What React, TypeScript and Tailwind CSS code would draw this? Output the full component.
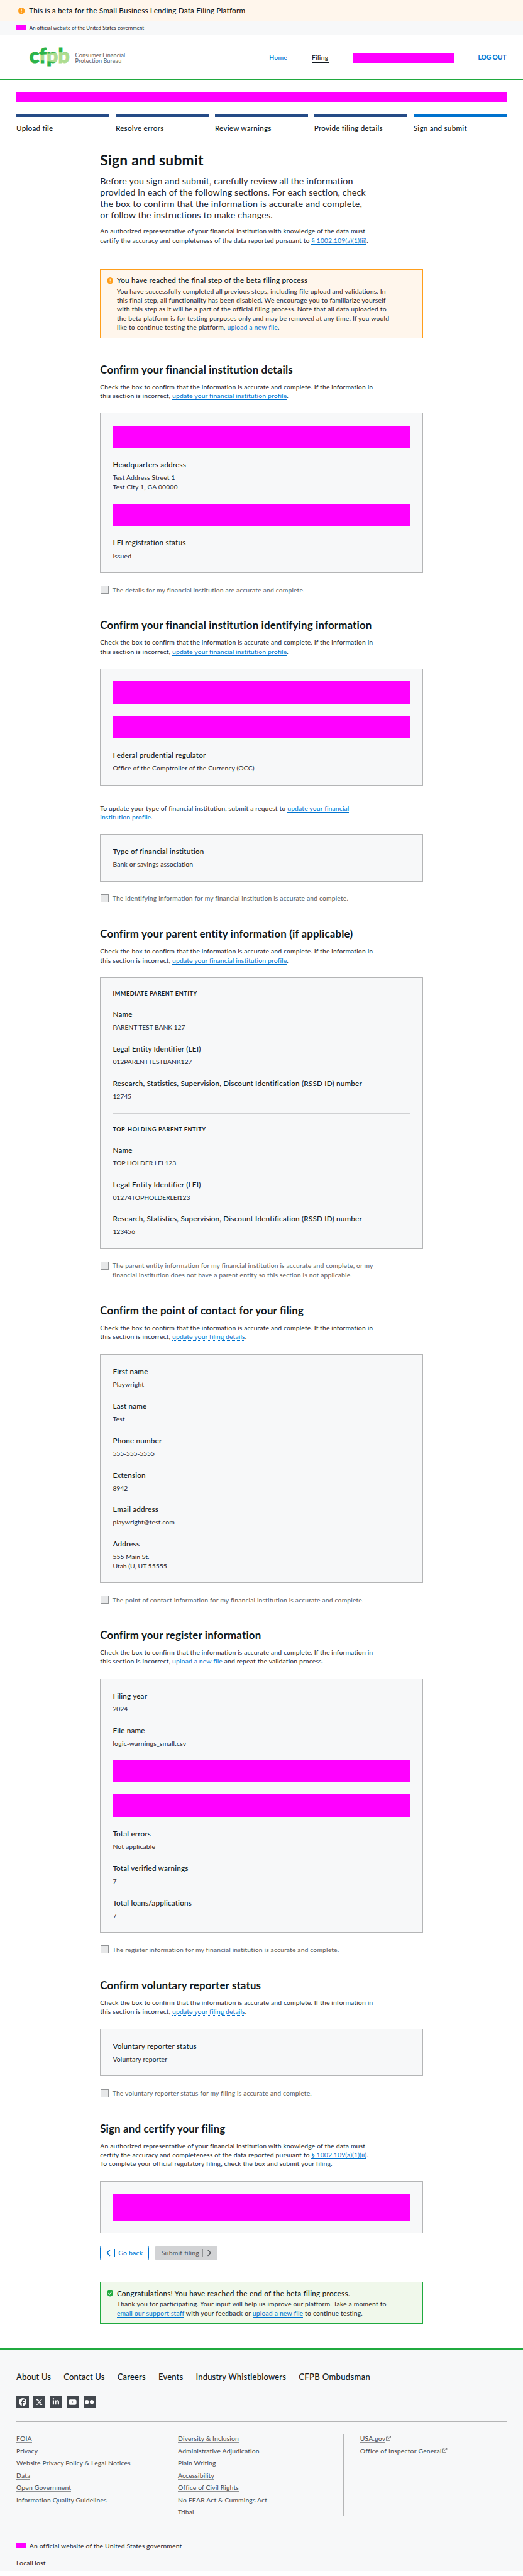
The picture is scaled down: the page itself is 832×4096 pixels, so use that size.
import type { ReactNode } from "react";
import { FaFacebook, FaLinkedinIn, FaXTwitter, FaYoutube } from "react-icons/fa6";

function TextLink({ children, dotted = false }: { children: ReactNode; dotted?: boolean }) {
  return (
    <a className={`border-b border-[#0072ce] text-[#0072ce] ${dotted ? "border-dotted" : "border-solid"}`}>
      {children}
    </a>
  );
}

function Redacted({ className }: { className: string }) {
  return <div className={`bg-[#ff00ff] ${className}`} />;
}

function WarningIcon({ className = "" }: { className?: string }) {
  return (
    <svg viewBox="0 0 16 16" className={`size-4 shrink-0 ${className}`}>
      <circle cx="8" cy="8" r="8" fill="#ff9e1b" />
      <path d="M8 3.2v6" stroke="#fff" strokeWidth="1.5" strokeLinecap="round" />
      <circle cx="8" cy="12" r="1" fill="#fff" />
    </svg>
  );
}

function SuccessIcon({ className = "" }: { className?: string }) {
  return (
    <svg viewBox="0 0 16 16" className={`size-4 shrink-0 ${className}`}>
      <circle cx="8" cy="8" r="8" fill="#20aa3f" />
      <path d="M4.3 8.4l2.6 2.7 4.8-6" stroke="#fff" strokeWidth="1.8" fill="none" strokeLinecap="round" strokeLinejoin="round" />
    </svg>
  );
}

function Logo() {
  return (
    <div className="flex items-center">
      <svg width="102" height="52" viewBox="0 0 102 52" className="overflow-visible">
        <defs>
          <pattern id="beam" patternUnits="userSpaceOnUse" x="-5" y="-5" width="115" height="65">
            <rect width="115" height="65" fill="#2cb34a" />
            <path d="M34 24.5L78 17H115V46H78V43L34 36.500Z" fill="#addc91" />
          </pattern>
        </defs>
        <text
          x="1"
          y="38.500"
          textLength="99"
          lengthAdjust="spacingAndGlyphs"
          fontFamily="Lato"
          fontWeight="900"
          fontSize="50"
          fill="url(#beam)"
          stroke="url(#beam)"
          strokeWidth="1.600"
        >
          cfpb
        </text>
      </svg>
      <div className="ml-[12px] text-[14px] leading-[14.300px] tracking-[0.010em] text-[#5a5d61]">
        <div>Consumer Financial</div>
        <div>Protection Bureau</div>
      </div>
    </div>
  );
}

function Field({ label, children, tracking = "" }: { label: string; children: ReactNode; tracking?: string }) {
  return (
    <div>
      <div className="mb-[9.900px] text-[18px] leading-[22.500px] font-medium tracking-[0.0165em] text-[#101820]">{label}</div>
      <div className={tracking}>{children}</div>
    </div>
  );
}

function Well({ children }: { children: ReactNode }) {
  return (
    <div className="mt-[31px] flex flex-col gap-[30px] border border-[#b4b5b6] bg-[#f7f8f9] p-[29.500px]">
      {children}
    </div>
  );
}

function Confirmation({ children }: { children: ReactNode }) {
  return (
    <label className="mt-[30px] flex items-start gap-[9px] text-[#5a5d61]">
      <span className="mt-[1px] ml-px size-[20px] shrink-0 border border-[#919395] bg-[#e7e8e9]" />
      <span className="whitespace-nowrap">{children}</span>
    </label>
  );
}

function Section({ title, intro, children, className = "mb-[59.500px]" }: { title: string; intro: ReactNode; children: ReactNode; className?: string }) {
  return (
    <section className={className}>
      <h2 className="text-[26px] leading-[32.500px] font-bold tracking-[0.0085em] text-[#101820]">{title}</h2>
      <p className="mt-[15px] whitespace-nowrap">{intro}</p>
      {children}
    </section>
  );
}

const standardIntro = (
  <>
    Check the box to confirm that the information is accurate and complete. If the information in
    <br />
    <span className="tracking-[0.0175em]">this section is incorrect, </span>
  </>
);

function ParentEntity({ title, name, lei, rssd }: { title: string; name: string; lei: string; rssd: string }) {
  return (
    <>
      <h3 className="text-[14px] leading-[17.500px] font-bold tracking-[0.0605em] text-[#101820]">{title}</h3>
      <Field label="Name" tracking="tracking-[-0.009em]">{name}</Field>
      <Field label="Legal Entity Identifier (LEI)" tracking="tracking-[-0.009em]">{lei}</Field>
      <Field label="Research, Statistics, Supervision, Discount Identification (RSSD ID) number" tracking="tracking-[-0.010em]">{rssd}</Field>
    </>
  );
}

function Chevron({ direction }: { direction: "left" | "right" }) {
  return (
    <svg viewBox="0 0 10 16" className="h-[16px] w-[10px]">
      <path
        d={direction === "left" ? "M8.500 1.500L2 8l6.500 6.500" : "M1.500 1.500L8 8l-6.500 6.500"}
        fill="none"
        stroke="currentColor"
        strokeWidth="2.300"
        strokeLinecap="round"
        strokeLinejoin="round"
      />
    </svg>
  );
}

function ExternalIcon() {
  return (
    <svg viewBox="0 0 13 13" className="ml-[1px] inline-block h-[13px] w-[13px] align-[0px]">
      <path d="M6.500 3H1v9h9V7M8 1h4v4M12 1L5.500 8" fill="none" stroke="#5a5d61" strokeWidth="1.300" />
    </svg>
  );
}

function FooterLink({ children, external = false }: { children: ReactNode; external?: boolean }) {
  return (
    <li className="whitespace-nowrap">
      <a className="border-b border-[#919395]">{children}</a>
      {external && <ExternalIcon />}
    </li>
  );
}

const steps = ["Upload file", "Resolve errors", "Review warnings", "Provide filing details", "Sign and submit"];
const footerNav = ["About Us", "Contact Us", "Careers", "Events", "Industry Whistleblowers"];
const footerA = ["FOIA", "Privacy", "Website Privacy Policy & Legal Notices", "Data", "Open Government", "Information Quality Guidelines"];
const footerB = ["Diversity & Inclusion", "Administrative Adjudication", "Plain Writing", "Accessibility", "Office of Civil Rights", "No FEAR Act & Cummings Act", "Tribal"];

export default function App() {
  return (
    <div className="w-[1280px] bg-white font-[Lato,'Open_Sans',sans-serif] text-[16px] leading-[22px] tracking-[0.014em] text-[#1d252d] [zoom:0.65]">
      <div className="flex h-[53px] items-center border-b border-[#d5d6d8] bg-[#fff6ec] pl-[45px]">
        <WarningIcon />
        <span className="ml-[10px] text-[18px] leading-[22.500px] font-medium tracking-[0.017em] text-[#101820]">
          This is a beta for the Small Business Lending Data Filing Platform
        </span>
      </div>
      <div className="flex h-[33px] items-center border-b border-[#b4b5b6] bg-[#f7f8f9] pl-[40px]">
        <Redacted className="mb-[2px] h-[13px] w-[24px]" />
        <span className="ml-[8px] text-[12px] leading-[16px] tracking-[0.015em]">An official website of the United States government</span>
      </div>

      <header className="flex h-[110.500px] items-center justify-between border-b-5 border-[#20aa3f] pt-[6px] pr-[40px] pl-[70px]">
        <Logo />
        <nav className="flex items-start gap-[60px] font-medium text-[#0072ce]">
          <a className="tracking-[0.020em]">Home</a>
          <a className="border-b-2 border-[#101820] pb-[1px] tracking-[0.032em] text-[#101820]">Filing</a>
          <Redacted className="mt-px h-[24px] w-[246px]" />
          <a className="w-[70px] font-bold whitespace-nowrap tracking-[-0.013em]">LOG OUT</a>
        </nav>
      </header>

      <div className="px-[40px]">
        <Redacted className="mt-[30px] h-[22.500px]" />
        <ol className="mt-[30px] grid grid-cols-5 gap-[15px]">
          {steps.map((step, i) => (
            <li key={step}>
              <div className={`h-[8px] ${i === 4 ? "bg-[#0072ce]" : "bg-[#254b87]"}`} />
              <div className="mt-[14px] text-[18px] leading-[22.500px] font-medium tracking-[0.020em] text-[#101820]">{step}</div>
            </li>
          ))}
        </ol>
      </div>

      <main className="mx-auto mt-[46.900px] w-[790px]">
        <h1 className="text-[35px] leading-[43.750px] font-bold tracking-[0.0118em] text-[#101820]">Sign and submit</h1>
        <p className="mt-[15px] text-[22px] leading-[27.500px] whitespace-nowrap">
          Before you sign and submit, carefully review all the information
          <br />
          provided in each of the following sections. For each section, check
          <br />
          the box to confirm that the information is accurate and complete,
          <br />
          or follow the instructions to make changes.
        </p>
        <p className="mt-[15.200px] whitespace-nowrap">
          An authorized representative of your financial institution with knowledge of the data must
          <br />
          certify the accuracy and completeness of the data reported pursuant to <TextLink>§ 1002.109(a)(1)(ii)</TextLink>.
        </p>

        <div className="mt-[59.500px] mb-[60px] flex border border-[#ff9e1b] bg-[#fff6ec] p-[14.500px]">
          <WarningIcon className="mt-[4px]" />
          <div className="ml-[9px] whitespace-nowrap">
            <div className="mb-[5px] text-[18px] leading-[22.500px] font-medium tracking-[0.020em] text-[#101820]">
              You have reached the final step of the beta filing process
            </div>
            <p className="tracking-[0.0185em]">
              You have successfully completed all previous steps, including file upload and validations. In
              <br />
              this final step, all functionality has been disabled. We encourage you to familiarize yourself
              <br />
              with this step as it will be a part of the official filing process. Note that all data uploaded to
              <br />
              the beta platform is for testing purposes only and may be removed at any time. If you would
              <br />
              like to continue testing the platform, <TextLink>upload a new file</TextLink>.
            </p>
          </div>
        </div>

        <Section
          title="Confirm your financial institution details"
          intro={<>{standardIntro}<TextLink>update your financial institution profile</TextLink>.</>}
        >
          <Well>
            <Redacted className="h-[54.500px]" />
            <Field label="Headquarters address">
              <div>Test Address Street 1</div>
              <div>Test City 1, GA 00000</div>
            </Field>
            <Redacted className="h-[54.500px]" />
            <Field label="LEI registration status">Issued</Field>
          </Well>
          <Confirmation>The details for my financial institution are accurate and complete.</Confirmation>
        </Section>

        <Section
          title="Confirm your financial institution identifying information"
          intro={<>{standardIntro}<TextLink>update your financial institution profile</TextLink>.</>}
        >
          <Well>
            <Redacted className="h-[54.500px]" />
            <Redacted className="h-[54.500px]" />
            <Field label="Federal prudential regulator">Office of the Comptroller of the Currency (OCC)</Field>
          </Well>
          <p className="mt-[44.500px] whitespace-nowrap">
            To update your type of financial institution, submit a request to <TextLink>update your financial</TextLink>
            <br />
            <TextLink>institution profile</TextLink>.
          </p>
          <Well>
            <Field label="Type of financial institution">Bank or savings association</Field>
          </Well>
          <Confirmation>The identifying information for my financial institution is accurate and complete.</Confirmation>
        </Section>

        <Section
          className="mb-[60.500px]"
          title="Confirm your parent entity information (if applicable)"
          intro={<>{standardIntro}<TextLink>update your financial institution profile</TextLink>.</>}
        >
          <Well>
            <ParentEntity title="IMMEDIATE PARENT ENTITY" name="PARENT TEST BANK 127" lei="012PARENTTESTBANK127" rssd="12745" />
            <hr className="-mb-[0.500px] border-t border-[#d0d1d3]" />
            <ParentEntity title="TOP-HOLDING PARENT ENTITY" name="TOP HOLDER LEI 123" lei="01274TOPHOLDERLEI123" rssd="123456" />
          </Well>
          <Confirmation>
            The parent entity information for my financial institution is accurate and complete, or my
            <br />
            financial institution does not have a parent entity so this section is not applicable.
          </Confirmation>
        </Section>

        <Section
          className="mb-[58.500px]"
          title="Confirm the point of contact for your filing"
          intro={<>{standardIntro}<TextLink dotted>update your filing details</TextLink>.</>}
        >
          <Well>
            <Field label="First name">Playwright</Field>
            <Field label="Last name">Test</Field>
            <Field label="Phone number" tracking="tracking-[-0.013em]">555-555-5555</Field>
            <Field label="Extension" tracking="tracking-[-0.010em]">8942</Field>
            <Field label="Email address">playwright@test.com</Field>
            <Field label="Address" tracking="tracking-normal">
              <div>555 Main St.</div>
              <div>Utah (U, UT 55555</div>
            </Field>
          </Well>
          <Confirmation>The point of contact information for my financial institution is accurate and complete.</Confirmation>
        </Section>

        <Section
          className="mb-[60px]"
          title="Confirm your register information"
          intro={<>{standardIntro}<TextLink dotted>upload a new file</TextLink> and repeat the validation process.</>}
        >
          <Well>
            <Field label="Filing year" tracking="tracking-[-0.010em]">2024</Field>
            <Field label="File name" tracking="tracking-[0.024em]">logic-warnings_small.csv</Field>
            <Redacted className="h-[54.400px]" />
            <Redacted className="h-[54.400px]" />
            <Field label="Total errors">Not applicable</Field>
            <Field label="Total verified warnings">7</Field>
            <Field label="Total loans/applications">7</Field>
          </Well>
          <Confirmation>The register information for my financial institution is accurate and complete.</Confirmation>
        </Section>

        <Section
          title="Confirm voluntary reporter status"
          intro={<>{standardIntro}<TextLink dotted>update your filing details</TextLink>.</>}
        >
          <Well>
            <Field label="Voluntary reporter status">Voluntary reporter</Field>
          </Well>
          <Confirmation>The voluntary reporter status for my filing is accurate and complete.</Confirmation>
        </Section>

        <Section
          className=""
          title="Sign and certify your filing"
          intro={
            <>
              An authorized representative of your financial institution with knowledge of the data must
              <br />
              certify the accuracy and completeness of the data reported pursuant to <TextLink>§ 1002.109(a)(1)(ii)</TextLink>.
              <br />
              To complete your official regulatory filing, check the box and submit your filing.
            </>
          }
        >
          <Well>
            <Redacted className="h-[66px]" />
          </Well>
        </Section>

        <div className="mt-[30px] flex h-[36.700px] gap-[15px] font-medium tracking-[0.022em]">
          <button className="flex items-center rounded-[4px] border border-[#0072ce] px-[14px] text-[#0072ce]">
            <Chevron direction="left" />
            <span className="ml-[10px] h-[19px] border-l border-[#0072ce] pl-[7.500px]" />
            Go back
          </button>
          <button className="flex items-center rounded-[4px] bg-[#d2d3d5] px-[15px] text-[#5a5d61]">
            Submit filing
            <span className="ml-[8px] h-[19px] border-l border-[#919395] pl-[10.500px]" />
            <Chevron direction="right" />
          </button>
        </div>

        <div className="mt-[52px] mb-[60px] flex border border-[#20aa3f] bg-[#f0f8eb] p-[14.500px]">
          <SuccessIcon className="mt-[4px]" />
          <div className="ml-[9px] whitespace-nowrap">
            <div className="mb-[5px] text-[18px] leading-[22.500px] font-medium tracking-[0.0235em] text-[#101820]">
              Congratulations! You have reached the end of the beta filing process.
            </div>
            <p className="tracking-[0.0175em]">
              Thank you for participating. Your input will help us improve our platform. Take a moment to
              <br />
              <TextLink>email our support staff</TextLink> with your feedback or <TextLink>upload a new file</TextLink> to continue testing.
            </p>
          </div>
        </div>
      </main>

      <footer className="h-[544px] border-t-5 border-[#20aa3f] bg-[#f7f8f9] px-[40px] pt-[51px]">
        <nav className="flex gap-[31px] text-[20px] leading-[25px] font-medium tracking-[0.014em] whitespace-nowrap text-[#101820]">
          {footerNav.map((item) => (
            <a key={item}>{item}</a>
          ))}
          <a className="tracking-[0.029em]">CFPB Ombudsman</a>
        </nav>
        <div className="mt-[34.700px] flex gap-[11px] text-white">
          <a className="flex size-[30px] items-center justify-center bg-[#43484e]"><FaFacebook className="size-[19px]" /></a>
          <a className="flex size-[30px] items-center justify-center bg-[#43484e]"><FaXTwitter className="size-[17px]" /></a>
          <a className="flex size-[30px] items-center justify-center bg-[#43484e]"><FaLinkedinIn className="size-[18px]" /></a>
          <a className="flex size-[30px] items-center justify-center bg-[#43484e]"><FaYoutube className="size-[20px]" /></a>
          <a className="flex size-[30px] items-center justify-center bg-[#43484e]">
            <svg viewBox="0 0 22 10" className="h-[10px] w-[22px]">
              <circle cx="5" cy="5" r="4.900" fill="#fff" />
              <circle cx="17" cy="5" r="4.900" fill="#fff" />
            </svg>
          </a>
        </div>
        <div className="mt-[32.500px] flex border-y border-[#b4b5b6] py-[29.500px] text-[#43484e]">
          <ul className="flex w-[395.500px] flex-col gap-[8px]">
            {footerA.map((item) => <FooterLink key={item}>{item}</FooterLink>)}
          </ul>
          <ul className="flex w-[404px] flex-col gap-[8px]">
            {footerB.map((item) => <FooterLink key={item}>{item}</FooterLink>)}
          </ul>
          <ul className="flex flex-col gap-[8px] border-l border-[#b4b5b6] pl-[40px] tracking-[0.022em]">
            <FooterLink external>USA.gov</FooterLink>
            <FooterLink external>Office of Inspector General</FooterLink>
          </ul>
        </div>
        <div className="mt-[29.500px] flex items-center">
          <Redacted className="h-[13px] w-[24px]" />
          <span className="ml-[8px]">An official website of the United States government</span>
        </div>
        <div className="mt-[20.300px]">LocalHost</div>
      </footer>
    </div>
  );
}
